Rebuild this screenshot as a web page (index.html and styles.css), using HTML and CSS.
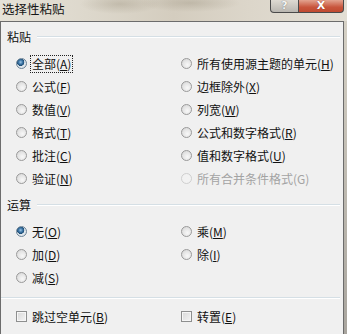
FILE: index.html
```html
<!DOCTYPE html>
<html lang="zh-CN">
<head>
<meta charset="utf-8">
<title>选择性粘贴</title>
<link rel="stylesheet" href="styles.css">
</head>
<body>
<div class="window">
  <div class="titlebar">
    <span class="title">选择性粘贴</span>
    <div class="caption-buttons">
      <span class="cbtn help">?</span>
      <span class="cbtn close">X</span>
    </div>
  </div>
  <div class="panel">
    <div class="group-head"><span>粘贴</span><i class="rule"></i></div>
    <div class="options">
      <label class="opt"><span class="radio checked"></span><span class="focus">全部(<u>A</u>)</span></label>
      <label class="opt"><span class="radio"></span><span>所有使用源主题的单元(<u>H</u>)</span></label>
      <label class="opt"><span class="radio"></span><span>公式(<u>F</u>)</span></label>
      <label class="opt"><span class="radio"></span><span>边框除外(<u>X</u>)</span></label>
      <label class="opt"><span class="radio"></span><span>数值(<u>V</u>)</span></label>
      <label class="opt"><span class="radio"></span><span>列宽(<u>W</u>)</span></label>
      <label class="opt"><span class="radio"></span><span>格式(<u>T</u>)</span></label>
      <label class="opt"><span class="radio"></span><span>公式和数字格式(<u>R</u>)</span></label>
      <label class="opt"><span class="radio"></span><span>批注(<u>C</u>)</span></label>
      <label class="opt"><span class="radio"></span><span>值和数字格式(<u>U</u>)</span></label>
      <label class="opt"><span class="radio"></span><span>验证(<u>N</u>)</span></label>
      <label class="opt disabled"><span class="radio"></span><span>所有合并条件格式(G)</span></label>
    </div>
    <div class="group-head second"><span>运算</span><i class="rule"></i></div>
    <div class="options ops">
      <label class="opt"><span class="radio checked"></span><span>无(<u>O</u>)</span></label>
      <label class="opt"><span class="radio"></span><span>乘(<u>M</u>)</span></label>
      <label class="opt"><span class="radio"></span><span>加(<u>D</u>)</span></label>
      <label class="opt"><span class="radio"></span><span>除(<u>I</u>)</span></label>
      <label class="opt"><span class="radio"></span><span>减(<u>S</u>)</span></label>
    </div>
    <div class="separator"></div>
    <div class="options checks">
      <label class="opt"><span class="check"></span><span>跳过空单元(<u>B</u>)</span></label>
      <label class="opt"><span class="check"></span><span>转置(<u>E</u>)</span></label>
    </div>
  </div>
</div>
</body>
</html>
```

FILE: styles.css
```css
html, body {
  margin: 0;
  padding: 0;
}

body {
  width: 347px;
  height: 334px;
  overflow: hidden;
  background: linear-gradient(to bottom, #d9d4c8, #a9a59e);
  font-family: "Noto Sans CJK SC", "Noto Sans", sans-serif;
  color: #111;
}

.window {
  display: flex;
  flex-direction: column;
  height: 334px;
}

.titlebar {
  height: 21px;
  display: flex;
  align-items: flex-start;
  justify-content: space-between;
  background:
    radial-gradient(ellipse 40px 10px at 120px 4px, rgba(150, 140, 120, 0.35), transparent),
    radial-gradient(ellipse 50px 9px at 190px 3px, rgba(140, 130, 110, 0.3), transparent),
    linear-gradient(to right, #e6e2d8 0%, #ddd8cc 25%, #d4cdbf 50%, #dcd6ca 72%, #e3dfd5 100%);
}

.title {
  font-size: 12.5px;
  line-height: 16px;
  margin: 1px 0 0 2px;
  color: #151515;
}

.caption-buttons {
  display: flex;
  margin-right: 3px;
  height: 13px;
}

.cbtn {
  display: flex;
  align-items: center;
  justify-content: center;
  height: 12px;
  border: 1px solid #4a4a4a;
  border-top: none;
  font-family: "DejaVu Sans", sans-serif;
  font-weight: bold;
  font-size: 11px;
  line-height: 12px;
}

.help {
  width: 27px;
  border-radius: 0 0 0 4px;
  background: linear-gradient(to bottom, #dedad2, #b9b6b0);
  color: #f4f4f4;
  text-shadow: 0 0 1px #555;
}

.close {
  width: 44px;
  border-left: none;
  border-radius: 0 0 4px 0;
  background: linear-gradient(to bottom, #e3a38f, #c8553c 60%, #c04a30);
  color: #fff;
  text-shadow: 0 0 1px #7a2010;
}

.panel {
  flex: 1;
  margin: 0 3px 0 0;
  border: 1px solid #6c6c6c;
  border-bottom: none;
  background: #f0f0f0;
  padding: 7px 3px 0 15px;
  font-size: 12px;
}

.group-head {
  display: flex;
  align-items: center;
  height: 16px;
  line-height: 16px;
  margin-left: -9px;
}

.group-head.second {
  margin-top: 7px;
}

.rule {
  flex: 1;
  height: 0;
  margin-left: 6px;
  border-top: 1px solid #d5dfe5;
  border-bottom: 1px solid #ffffff;
}

.options {
  display: grid;
  grid-template-columns: 165px 1fr;
  grid-auto-rows: 23px;
  margin-top: 7px;
}

.opt {
  display: flex;
  align-items: center;
  white-space: nowrap;
  line-height: 16px;
}

.opt u {
  text-decoration-thickness: 1px;
  text-underline-offset: 1px;
}

.radio {
  width: 11px;
  height: 11px;
  flex: none;
  margin-right: 5px;
  border: 1px solid #9a9a9a;
  border-radius: 50%;
  box-sizing: border-box;
  background: radial-gradient(circle at 60% 65%, #f8f8f8 0%, #e4e4e4 55%, #cfcfcf 100%);
}

.radio.checked {
  border-color: #6d8396;
  background:
    radial-gradient(circle at 40% 35%, #9cc4e4 0%, #3f78a8 25%, #1b4a72 45%, transparent 50%),
    radial-gradient(circle, #eef2f5 0%, #d4dde4 100%);
}

.focus {
  border: 1px dotted #222;
  padding: 0 1px;
  margin-left: -2px;
  line-height: 16px;
}

.disabled {
  color: #a3a3a3;
}

.disabled .radio {
  border-color: #cfcfcf;
  background: #f2f2f2;
}

.separator {
  margin: 8px 0 0 -15px;
  height: 0;
  border-top: 1px solid #d5dfe5;
  border-bottom: 1px solid #ffffff;
}

.checks {
  margin-top: 6px;
}

.check {
  width: 11px;
  height: 11px;
  flex: none;
  margin-right: 5px;
  box-sizing: border-box;
  border: 1px solid #8e8f8f;
  background: linear-gradient(135deg, #d8d8d8, #f4f4f4);
  box-shadow: inset 0 0 0 1px #f6f6f6;
}
```
